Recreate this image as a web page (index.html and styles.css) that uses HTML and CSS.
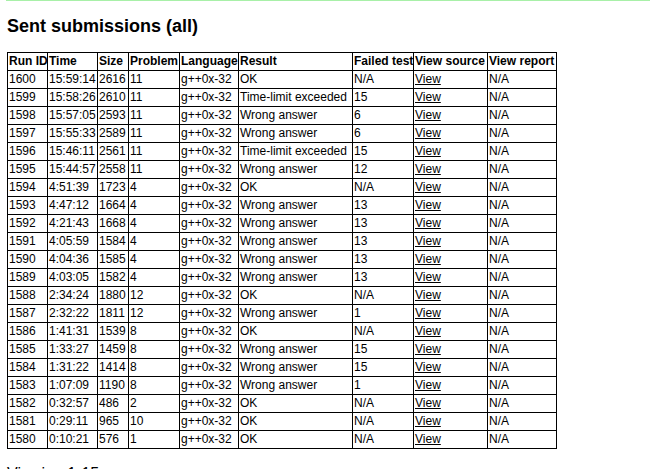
FILE: index.html
```html
<!DOCTYPE html>
<html>
<head>
<meta charset="utf-8">
<title>Sent submissions</title>
<link rel="stylesheet" href="styles.css">
</head>
<body>
<div class="topline"></div>
<div class="page">
<h2 class="title">Sent submissions (all)</h2>
<table class="subs">
<colgroup>
<col class="c-id"><col class="c-time"><col class="c-size"><col class="c-prob"><col class="c-lang"><col class="c-res"><col class="c-fail"><col class="c-src"><col class="c-rep">
</colgroup>
<thead>
<tr><th>Run ID</th><th>Time</th><th>Size</th><th>Problem</th><th>Language</th><th>Result</th><th>Failed test</th><th>View source</th><th>View report</th></tr>
</thead>
<tbody>
<tr><td>1600</td><td>15:59:14</td><td>2616</td><td>11</td><td>g++0x-32</td><td>OK</td><td>N/A</td><td><a href="#">View</a></td><td>N/A</td></tr>
<tr><td>1599</td><td>15:58:26</td><td>2610</td><td>11</td><td>g++0x-32</td><td>Time-limit exceeded</td><td>15</td><td><a href="#">View</a></td><td>N/A</td></tr>
<tr><td>1598</td><td>15:57:05</td><td>2593</td><td>11</td><td>g++0x-32</td><td>Wrong answer</td><td>6</td><td><a href="#">View</a></td><td>N/A</td></tr>
<tr><td>1597</td><td>15:55:33</td><td>2589</td><td>11</td><td>g++0x-32</td><td>Wrong answer</td><td>6</td><td><a href="#">View</a></td><td>N/A</td></tr>
<tr><td>1596</td><td>15:46:11</td><td>2561</td><td>11</td><td>g++0x-32</td><td>Time-limit exceeded</td><td>15</td><td><a href="#">View</a></td><td>N/A</td></tr>
<tr><td>1595</td><td>15:44:57</td><td>2558</td><td>11</td><td>g++0x-32</td><td>Wrong answer</td><td>12</td><td><a href="#">View</a></td><td>N/A</td></tr>
<tr><td>1594</td><td>4:51:39</td><td>1723</td><td>4</td><td>g++0x-32</td><td>OK</td><td>N/A</td><td><a href="#">View</a></td><td>N/A</td></tr>
<tr><td>1593</td><td>4:47:12</td><td>1664</td><td>4</td><td>g++0x-32</td><td>Wrong answer</td><td>13</td><td><a href="#">View</a></td><td>N/A</td></tr>
<tr><td>1592</td><td>4:21:43</td><td>1668</td><td>4</td><td>g++0x-32</td><td>Wrong answer</td><td>13</td><td><a href="#">View</a></td><td>N/A</td></tr>
<tr><td>1591</td><td>4:05:59</td><td>1584</td><td>4</td><td>g++0x-32</td><td>Wrong answer</td><td>13</td><td><a href="#">View</a></td><td>N/A</td></tr>
<tr><td>1590</td><td>4:04:36</td><td>1585</td><td>4</td><td>g++0x-32</td><td>Wrong answer</td><td>13</td><td><a href="#">View</a></td><td>N/A</td></tr>
<tr><td>1589</td><td>4:03:05</td><td>1582</td><td>4</td><td>g++0x-32</td><td>Wrong answer</td><td>13</td><td><a href="#">View</a></td><td>N/A</td></tr>
<tr><td>1588</td><td>2:34:24</td><td>1880</td><td>12</td><td>g++0x-32</td><td>OK</td><td>N/A</td><td><a href="#">View</a></td><td>N/A</td></tr>
<tr><td>1587</td><td>2:32:22</td><td>1811</td><td>12</td><td>g++0x-32</td><td>Wrong answer</td><td>1</td><td><a href="#">View</a></td><td>N/A</td></tr>
<tr><td>1586</td><td>1:41:31</td><td>1539</td><td>8</td><td>g++0x-32</td><td>OK</td><td>N/A</td><td><a href="#">View</a></td><td>N/A</td></tr>
<tr><td>1585</td><td>1:33:27</td><td>1459</td><td>8</td><td>g++0x-32</td><td>Wrong answer</td><td>15</td><td><a href="#">View</a></td><td>N/A</td></tr>
<tr><td>1584</td><td>1:31:22</td><td>1414</td><td>8</td><td>g++0x-32</td><td>Wrong answer</td><td>15</td><td><a href="#">View</a></td><td>N/A</td></tr>
<tr><td>1583</td><td>1:07:09</td><td>1190</td><td>8</td><td>g++0x-32</td><td>Wrong answer</td><td>1</td><td><a href="#">View</a></td><td>N/A</td></tr>
<tr><td>1582</td><td>0:32:57</td><td>486</td><td>2</td><td>g++0x-32</td><td>OK</td><td>N/A</td><td><a href="#">View</a></td><td>N/A</td></tr>
<tr><td>1581</td><td>0:29:11</td><td>965</td><td>10</td><td>g++0x-32</td><td>OK</td><td>N/A</td><td><a href="#">View</a></td><td>N/A</td></tr>
<tr><td>1580</td><td>0:10:21</td><td>576</td><td>1</td><td>g++0x-32</td><td>OK</td><td>N/A</td><td><a href="#">View</a></td><td>N/A</td></tr>
</tbody>
</table>
<p class="viewing">Viewing 1-15</p>
</div>
</body>
</html>
```
FILE: styles.css
```css
html, body {
  margin: 0;
  padding: 0;
  background: #ffffff;
  color: #000000;
  font-family: "Liberation Sans", Arial, sans-serif;
}
.topline {
  height: 1px;
  margin: 0 1px 0 6px;
  background: #a8f0a8;
}
.page {
  padding: 0 7px;
}
.title {
  margin: 14px 0 15px 0;
  font-size: 18px;
  line-height: 22px;
  font-weight: bold;
}
.subs {
  border-collapse: collapse;
  table-layout: fixed;
  width: 550px;
  font-size: 12px;
  line-height: 15px;
}
.c-id { width: 40px; }
.c-time { width: 50px; }
.c-size { width: 31px; }
.c-prob { width: 51px; }
.c-lang { width: 59px; }
.c-res { width: 114px; }
.c-fail { width: 61px; }
.c-src { width: 74px; }
.c-rep { width: 69px; }
.subs th,
.subs td {
  border: 1px solid #000000;
  padding: 1px 0 1px 1px;
  text-align: left;
  white-space: nowrap;
  overflow: visible;
}
.subs th {
  font-weight: bold;
}
.subs a {
  color: #000000;
  text-decoration: underline;
}
.viewing {
  margin: 16px 0 0 0;
  font-size: 16px;
}
```
